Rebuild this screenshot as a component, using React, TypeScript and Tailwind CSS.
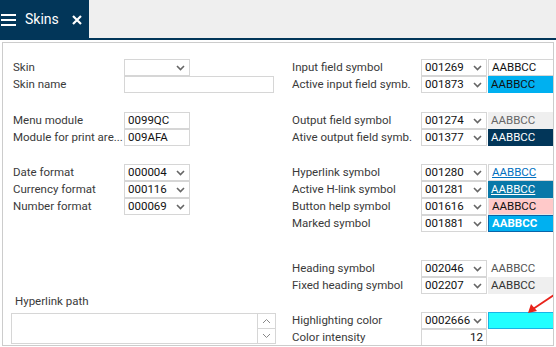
import React from "react";

const font = { fontFamily: "Roboto, 'Liberation Sans', sans-serif" };

function Chevron() {
  return (
    <svg width="9" height="6" viewBox="0 0 9 6" className="shrink-0">
      <path d="M1 1 L4.5 4.5 L8 1" stroke="#666" strokeWidth="1.6" fill="none" />
    </svg>
  );
}

function Select({ value = "", w = "w-[66px]" }: { value?: string; w?: string }) {
  return (
    <div className={`${w} h-[17px] shrink-0 border border-[#d6d6d6] bg-white flex items-center justify-between pl-[3px] pr-[4px] text-[11.5px] text-[#111] leading-none`}>
      <span>{value}</span>
      <Chevron />
    </div>
  );
}

function Input({ value = "", w = "w-[66px]", right = false }: { value?: string; w?: string; right?: boolean }) {
  return (
    <div className={`${w} h-[17px] shrink-0 border border-[#d6d6d6] bg-white flex items-center px-[3px] text-[11.5px] text-[#111] leading-none ${right ? "justify-end" : ""}`}>
      {value}
    </div>
  );
}

function Row({ label, children, lw }: { label: string; children: React.ReactNode; lw: string }) {
  return (
    <div className="flex items-center h-[17px]">
      <div className={`${lw} shrink-0 text-[11.5px] text-[#3a3a3a] leading-none whitespace-nowrap`}>{label}</div>
      {children}
    </div>
  );
}

type Swatch = { cls: string; text: string };

function ColorRow({ label, code, sw }: { label: string; code: string; sw: Swatch }) {
  return (
    <Row label={label} lw="w-[129px]">
      <Select value={code} />
      <div className={`ml-[1px] w-[70px] h-[17px] shrink-0 flex items-center px-[3px] text-[11.5px] leading-none ${sw.cls}`}>{sw.text}</div>
    </Row>
  );
}

export default function App() {
  return (
    <div className="w-[556px] h-[347px] bg-white overflow-hidden flex flex-col" style={font}>
      {/* tab bar */}
      <div className="h-[38px] bg-[#efefef] flex shrink-0">
        <div className="w-[89px] bg-[#023659] flex items-center text-white">
          <svg width="16" height="14" viewBox="0 0 16 14" className="ml-[1px] mt-[1px]">
            <rect x="0" y="1" width="15" height="2" fill="white" />
            <rect x="0" y="6" width="15" height="2" fill="white" />
            <rect x="0" y="11" width="15" height="2" fill="white" />
          </svg>
          <span className="ml-[8px] text-[14px] leading-none">Skins</span>
          <svg width="10" height="10" viewBox="0 0 10 10" className="ml-[13px] mt-[1px]">
            <path d="M1 1 L9 9 M9 1 L1 9" stroke="white" strokeWidth="2.2" />
          </svg>
        </div>
      </div>
      <div className="h-[2px] bg-[#023659] shrink-0" />
      <div className="h-[2px] shrink-0" />
      {/* panel */}
      <div className="relative ml-[2px] mr-[2px] h-[304px] border border-[#cccccc] overflow-hidden flex pt-[16px]">
        {/* left column */}
        <div className="w-[280px] shrink-0 flex flex-col pl-[10px]">
          <Row label="Skin" lw="w-[111px]"><Select /></Row>
          <Row label="Skin name" lw="w-[111px]"><Input w="w-[150px]" /></Row>
          <div className="mt-[19px]"><Row label="Menu module" lw="w-[111px]"><Input value="0099QC" /></Row></div>
          <Row label="Module for print are..." lw="w-[111px]"><Input value="009AFA" /></Row>
          <div className="mt-[18px] flex flex-col">
            <Row label="Date format" lw="w-[111px]"><Select value="000004" /></Row>
            <Row label="Currency format" lw="w-[111px]"><Select value="000116" /></Row>
            <Row label="Number format" lw="w-[111px]"><Select value="000069" /></Row>
          </div>
          <div className="mt-[81px] pl-[2px] text-[11.5px] text-[#3a3a3a] leading-none">Hyperlink path</div>
          <div className="mt-[5px] -ml-[2px] w-[265px] h-[31px] border border-[#d6d6d6] flex justify-end">
            <div className="w-[18px] flex flex-col border-l border-[#d6d6d6]">
              <div className="flex-1 flex items-center justify-center border-b border-[#d6d6d6]">
                <svg width="9" height="6" viewBox="0 0 9 6"><path d="M1 5 L4.5 1.5 L8 5" stroke="#888" strokeWidth="1" fill="none" /></svg>
              </div>
              <div className="flex-1 flex items-center justify-center">
                <svg width="9" height="6" viewBox="0 0 9 6"><path d="M1 1 L4.5 4.5 L8 1" stroke="#888" strokeWidth="1" fill="none" /></svg>
              </div>
            </div>
          </div>
        </div>
        {/* right column */}
        <div className="flex flex-col pl-[9px] shrink-0">
          <ColorRow label="Input field symbol" code="001269" sw={{ cls: "bg-white border border-[#d6d6d6] text-[#111]", text: "AABBCC" }} />
          <ColorRow label="Active input field symb." code="001873" sw={{ cls: "bg-[#00b0f0] text-[#111]", text: "AABBCC" }} />
          <div className="mt-[19px]">
            <ColorRow label="Output field symbol" code="001274" sw={{ cls: "bg-[#efefef] text-[#666]", text: "AABBCC" }} />
          </div>
          <ColorRow label="Ative output field symb." code="001377" sw={{ cls: "bg-[#023659] text-white", text: "AABBCC" }} />
          <div className="mt-[18px] flex flex-col">
            <ColorRow label="Hyperlink symbol" code="001280" sw={{ cls: "bg-white border border-[#d6d6d6] text-[#0070c0] underline", text: "AABBCC" }} />
            <ColorRow label="Active H-link symbol" code="001281" sw={{ cls: "bg-[#0878a8] text-white underline", text: "AABBCC" }} />
            <ColorRow label="Button help symbol" code="001616" sw={{ cls: "bg-[#ffc9c9] border border-[#e5e5e5] text-[#111]", text: "AABBCC" }} />
            <ColorRow label="Marked symbol" code="001881" sw={{ cls: "bg-[#00b0f0] border border-[#0a64a8] text-white font-bold", text: "AABBCC" }} />
          </div>
          <div className="mt-[28px]">
            <ColorRow label="Heading symbol" code="002046" sw={{ cls: "text-[#555]", text: "AABBCC" }} />
          </div>
          <ColorRow label="Fixed heading symbol" code="002207" sw={{ cls: "bg-[#efefef] text-[#333]", text: "AABBCC" }} />
          <div className="mt-[18px]">
            <ColorRow label="Highlighting color" code="0002666" sw={{ cls: "bg-[#22ffff] border border-[#19b4e6]", text: "" }} />
          </div>
          <Row label="Color intensity" lw="w-[129px]"><Input value="12" right /></Row>
        </div>
        {/* annotation arrow */}
        <svg className="absolute left-[522px] top-[250px]" width="32" height="22" viewBox="0 0 32 22">
          <path d="M29 2 L8 16" stroke="#e8231b" strokeWidth="1.8" />
          <path d="M3 20 L6 11 L12 18 Z" fill="#e8231b" />
        </svg>
      </div>
    </div>
  );
}
